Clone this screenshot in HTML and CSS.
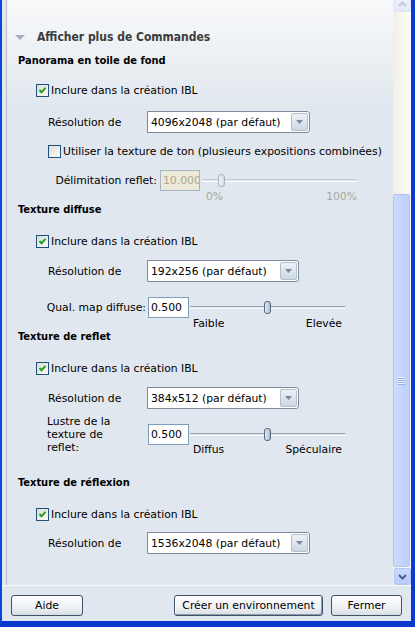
FILE: index.html
```html
<!DOCTYPE html>
<html lang="fr">
<head>
  <meta charset="UTF-8" />
  <title>Créer un environnement</title>
  <link rel="stylesheet" href="styles.css">
</head>
<body>
  <div class="window">
    <div class="main">
      <div class="panel">
        <div class="hdr"><span class="tri"></span>Afficher plus de Commandes</div>

        <!-- Panorama -->
        <div class="title t-first">Panorama en toile de fond</div>
        <div class="chk"><span class="box"><svg width="11" height="11" viewBox="0 0 11 11"><path d="M2.5 5 L4.5 7.2 L8.5 2.8" fill="none" stroke="#21a121" stroke-width="2"/></svg></span>Inclure dans la création IBL</div>
        <div class="res">
          <span class="lbl">Résolution de</span>
          <div class="combo wide"><span>4096x2048 (par défaut)</span><i class="drop"><svg width="7" height="4" viewBox="0 0 7 4"><path d="M0 0 H7 L3.5 4 Z" fill="#7a8aa3"/></svg></i></div>
        </div>
        <div class="chk chk-sub"><span class="box off"></span>Utiliser la texture de ton (plusieurs expositions combinées)</div>
        <div class="ctl delim">
          <span class="lbl-r">Délimitation reflet:</span>
          <div class="num dis">10.000</div>
          <div class="slider">
            <div class="track dis"></div>
            <span class="thumb dis" style="left:16px"></span>
          </div>
        </div>
        <div class="ticks delim-ticks dis"><span>0%</span><span>100%</span></div>

        <!-- Texture diffuse -->
        <div class="title">Texture diffuse</div>
        <div class="chk"><span class="box"><svg width="11" height="11" viewBox="0 0 11 11"><path d="M2.5 5 L4.5 7.2 L8.5 2.8" fill="none" stroke="#21a121" stroke-width="2"/></svg></span>Inclure dans la création IBL</div>
        <div class="res">
          <span class="lbl">Résolution de</span>
          <div class="combo"><span>192x256 (par défaut)</span><i class="drop"><svg width="7" height="4" viewBox="0 0 7 4"><path d="M0 0 H7 L3.5 4 Z" fill="#7a8aa3"/></svg></i></div>
        </div>
        <div class="ctl qual">
          <span class="lbl-q">Qual. map diffuse:</span>
          <div class="num">0.500</div>
          <div class="slider">
            <div class="track"></div>
            <span class="thumb" style="left:74px"></span>
          </div>
        </div>
        <div class="ticks qual-ticks"><span>Faible</span><span>Elevée</span></div>

        <!-- Texture de reflet -->
        <div class="title">Texture de reflet</div>
        <div class="chk"><span class="box"><svg width="11" height="11" viewBox="0 0 11 11"><path d="M2.5 5 L4.5 7.2 L8.5 2.8" fill="none" stroke="#21a121" stroke-width="2"/></svg></span>Inclure dans la création IBL</div>
        <div class="res">
          <span class="lbl">Résolution de</span>
          <div class="combo"><span>384x512 (par défaut)</span><i class="drop"><svg width="7" height="4" viewBox="0 0 7 4"><path d="M0 0 H7 L3.5 4 Z" fill="#7a8aa3"/></svg></i></div>
        </div>
        <div class="lustre">
          <span class="lbl-l">Lustre de la texture de reflet:</span>
          <div class="lustre-ctl">
            <div class="ctl">
              <div class="num">0.500</div>
              <div class="slider">
                <div class="track"></div>
                <span class="thumb" style="left:74px"></span>
              </div>
            </div>
            <div class="ticks lustre-ticks"><span>Diffus</span><span>Spéculaire</span></div>
          </div>
        </div>

        <!-- Texture de réflexion -->
        <div class="title t-last">Texture de réflexion</div>
        <div class="chk"><span class="box"><svg width="11" height="11" viewBox="0 0 11 11"><path d="M2.5 5 L4.5 7.2 L8.5 2.8" fill="none" stroke="#21a121" stroke-width="2"/></svg></span>Inclure dans la création IBL</div>
        <div class="res res-last">
          <span class="lbl">Résolution de</span>
          <div class="combo wide"><span>1536x2048 (par défaut)</span><i class="drop"><svg width="7" height="4" viewBox="0 0 7 4"><path d="M0 0 H7 L3.5 4 Z" fill="#7a8aa3"/></svg></i></div>
        </div>
      </div>

      <div class="scrollbar">
        <div class="sb-btn sb-up"><svg width="9" height="6" viewBox="0 0 9 6"><path d="M1 5 L4.5 1.5 L8 5" fill="none" stroke="#c3cad6" stroke-width="2"/></svg></div>
        <div class="sb-gap"></div>
        <div class="sb-thumb"><span class="grip"></span></div>
        <div class="sb-btn sb-down"><svg width="9" height="6" viewBox="0 0 9 6"><path d="M1 1 L4.5 4.5 L8 1" fill="none" stroke="#4d6185" stroke-width="2"/></svg></div>
      </div>
    </div>

    <div class="footer">
      <button class="btn btn-help">Aide</button>
      <button class="btn btn-create">Créer un environnement</button>
      <button class="btn btn-close">Fermer</button>
    </div>
  </div>
</body>
</html>
```

FILE: styles.css
```css
body {
  margin: 0;
  font-family: "DejaVu Sans", sans-serif;
  font-size: 10.8px;
  color: #000;
  background: #e0e7ee;
}

.window {
  width: 409px;
  height: 621px;
  border-left: 2px solid #0c45d8;
  border-right: 4px solid #0a3ad0;
  border-bottom: 6px solid #0b38cc;
  display: flex;
  flex-direction: column;
  background: #e0e7ee;
}

.main {
  display: flex;
  height: 585px;
  padding-left: 4px;
}

.panel {
  flex: 1;
  border-left: 1px solid #b4bdc8;
  padding: 27px 0 0 8px;
  background: linear-gradient(#f8f9fa, #e0e7ee 110px);
  display: flex;
  flex-direction: column;
  align-items: flex-start;
}

/* header */
.hdr {
  height: 20px;
  display: flex;
  align-items: center;
  font-family: "DejaVu Sans Condensed", "DejaVu Sans", sans-serif;
  font-size: 12px;
  font-weight: bold;
  color: #3c3c3c;
}

.tri {
  width: 0;
  height: 0;
  border-left: 5px solid transparent;
  border-right: 5px solid transparent;
  border-top: 5px solid #a3b0c2;
  margin-right: 12px;
}

.title {
  height: 16px;
  line-height: 16px;
  margin-left: 3px;
  font-family: "DejaVu Sans Condensed", "DejaVu Sans", sans-serif;
  font-size: 11px;
  font-weight: bold;
}

.t-first { margin-top: 6px; }
.t-last { margin-top: 20px; }

/* checkbox rows */
.chk {
  height: 18px;
  display: flex;
  align-items: center;
  margin: 14px 0 0 21px;
  white-space: nowrap;
}

.t-first + .chk { margin-top: 12px; }

.chk-sub {
  margin: 9px 0 0 33px;
}

.box {
  width: 11px;
  height: 11px;
  border: 1px solid #1c5180;
  background: linear-gradient(135deg, #dcdcd7, #fbfbf9);
  margin-right: 2px;
  display: flex;
  flex-shrink: 0;
}

/* resolution rows */
.res {
  display: flex;
  align-items: center;
  margin: 10px 0 0 33px;
}

.t-first + .chk + .res { margin-top: 12px; }
.res-last { margin-top: 9px; }

.lbl {
  width: 99px;
}

.combo {
  width: 152px;
  height: 22px;
  box-sizing: border-box;
  border: 1px solid #7d8c9c;
  border-radius: 0 3px 3px 0;
  background: #fff;
  display: flex;
  align-items: center;
}

.combo.wide { width: 163px; }

.combo span {
  flex: 1;
  padding-left: 3px;
  white-space: nowrap;
}

.drop {
  width: 15px;
  height: 16px;
  margin-right: 1px;
  border: 1px solid #b3c0cf;
  border-radius: 2px;
  background: linear-gradient(#eef2f7, #cdd7e3);
  display: flex;
  align-items: center;
  justify-content: center;
}

/* numeric + slider rows */
.ctl {
  display: flex;
  align-items: center;
  height: 21px;
}

.delim { margin: 10px 0 0 33px; }
.qual { margin: 15px 0 0 32px; }

.lbl-r,
.lbl-q {
  display: flex;
  justify-content: flex-end;
  box-sizing: border-box;
  white-space: nowrap;
}

.lbl-r {
  width: 112px;
  padding-right: 3px;
}

.lbl-q {
  width: 101px;
  padding-right: 2px;
}

.num {
  width: 41px;
  height: 21px;
  box-sizing: border-box;
  border: 1px solid #7f9db9;
  background: #fff;
  padding-left: 2px;
  line-height: 19px;
  overflow: hidden;
  white-space: nowrap;
  flex-shrink: 0;
}

.num.dis {
  width: 40px;
  background: #ece9d8;
  border-color: #a5b5c5;
  color: #aca899;
}

.slider {
  position: relative;
  width: 155px;
  height: 21px;
  margin-left: 1px;
  display: flex;
  align-items: center;
}

.delim .slider { margin-left: 2px; }

.track {
  width: 100%;
  height: 1px;
  border-top: 1px solid #98a4b1;
  border-bottom: 1px solid #fbfcfd;
  margin-top: -1px;
}

.track.dis {
  border-top-color: #c2c9d1;
}

.thumb {
  position: absolute;
  top: 4px;
  width: 5px;
  height: 11px;
  border: 1px solid #56687f;
  border-radius: 3px;
  background: linear-gradient(to right, #e6ebf2, #aebccc);
}

.thumb.dis {
  border-color: #a9b3bf;
  background: linear-gradient(to right, #f0f2f5, #d5dbe2);
}

.ticks {
  height: 11px;
  line-height: 11px;
  display: flex;
  justify-content: space-between;
  box-sizing: border-box;
}

.ticks.dis { color: #aca899; }

.delim-ticks {
  width: 155px;
  margin-left: 189px;
  padding: 0 2px;
}

.qual-ticks {
  width: 155px;
  margin-left: 175px;
  padding: 0 3px;
}

/* lustre */
.lustre {
  display: flex;
  margin: 6px 0 0 32px;
}

.lbl-l {
  width: 78px;
  margin-right: 23px;
  line-height: 13px;
}

.lustre-ctl {
  margin-top: 9px;
}

.lustre-ticks {
  width: 155px;
  margin-left: 42px;
  padding: 0 3px;
  line-height: 10px;
  height: 10px;
}

/* scrollbar */
.scrollbar {
  width: 18px;
  display: flex;
  flex-direction: column;
  background: linear-gradient(to right, #f1efe6, #fdfcf8);
}

.sb-btn {
  width: 15px;
  height: 15px;
  margin-left: 1px;
  border: 1px solid #c0d0f4;
  border-radius: 2px;
  display: flex;
  align-items: center;
  justify-content: center;
}

.sb-up {
  margin-top: -5px;
  background: linear-gradient(#f2f5fc, #e2e9f8);
  border-color: #dce4f6;
}

.sb-gap { height: 182px; }

.sb-thumb {
  width: 15px;
  height: 371px;
  border: 1px solid #b1c5f4;
  border-radius: 2px;
  background: linear-gradient(to right, #cddbfd, #bcd0fb);
  display: flex;
  align-items: center;
  justify-content: center;
}

.grip {
  width: 7px;
  height: 1px;
  background: #eef3fe;
  box-shadow: 0 2px 0 #eef3fe, 0 4px 0 #eef3fe, 0 6px 0 #eef3fe,
    0 1px 0 #8fb0f2, 0 3px 0 #8fb0f2, 0 5px 0 #8fb0f2, 0 7px 0 #8fb0f2;
  margin-top: -7px;
}

.sb-down {
  margin-top: 1px;
  background: linear-gradient(#cddbfd, #b6cbfa);
  border-color: #b3c7f5;
}

/* footer */
.footer {
  flex: 1;
  border-top: 1px solid #f6f8fa;
  display: flex;
  align-items: flex-start;
  padding: 9px 9px 0 9px;
}

.btn {
  height: 21px;
  box-sizing: border-box;
  border: 1px solid #3f5268;
  border-radius: 3px;
  background: linear-gradient(#fdfdfe, #eef1f4 60%, #d9dee4);
  font-family: inherit;
  font-size: 10.8px;
  color: #000;
  padding: 0;
}

.btn-help { width: 72px; }

.btn-create {
  width: 149px;
  margin-left: auto;
  box-shadow: inset 1px 1px 0 #fff, inset -1px -1px 0 #8e9aaa;
}

.btn-close {
  width: 71px;
  margin-left: 8px;
}
```
